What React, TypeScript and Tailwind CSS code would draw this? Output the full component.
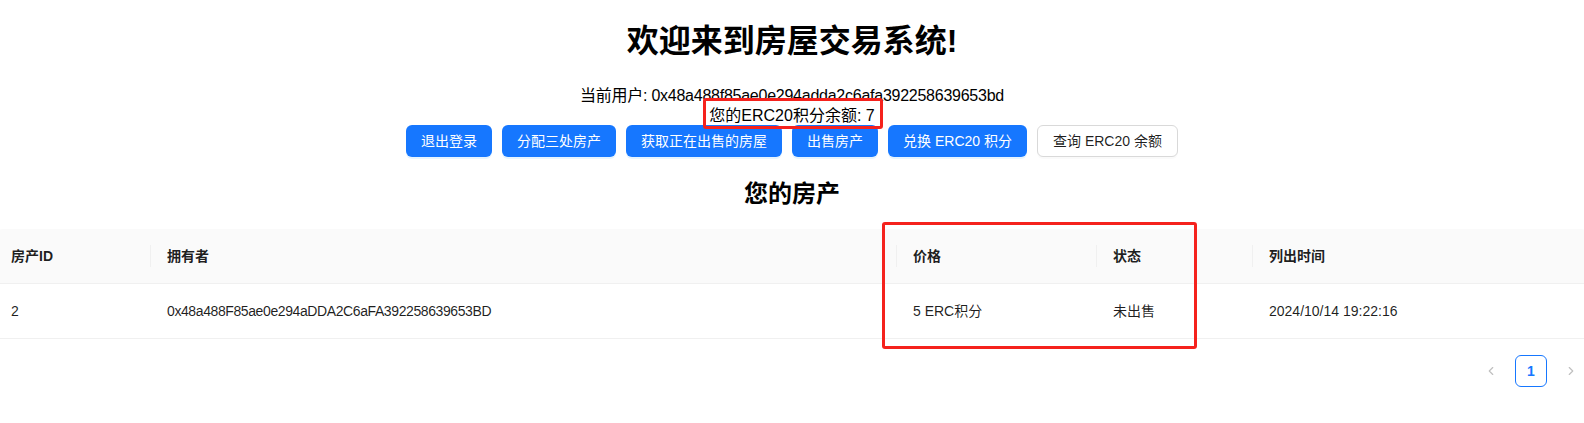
import React from 'react';
import { ChevronLeft, ChevronRight } from 'lucide-react';

const columns = [
  { key: 'id', title: '房产ID', width: 'w-[156px]' },
  { key: 'owner', title: '拥有者', width: 'w-[746px]' },
  { key: 'price', title: '价格', width: 'w-[200px]' },
  { key: 'status', title: '状态', width: 'w-[156px]' },
  { key: 'listedAt', title: '列出时间', width: 'flex-1' },
];

const rows = [
  {
    id: '2',
    owner: '0x48a488F85ae0e294aDDA2C6aFA392258639653BD',
    price: '5 ERC积分',
    status: '未出售',
    listedAt: '2024/10/14 19:22:16',
  },
];

const actions = ['退出登录', '分配三处房产', '获取正在出售的房屋', '出售房产', '兑换 ERC20 积分'];

const App: React.FC = () => {
  return (
    <div className="relative min-h-[423px] overflow-hidden bg-white font-['Liberation_Sans','Noto_Sans_CJK_SC',sans-serif] text-black">
      <div className="flex flex-col items-center">
        {/* Header */}
        <h1 className="mt-[21px] text-[32px] leading-[40px] font-bold">欢迎来到房屋交易系统!</h1>
        <p className="mt-[24px] text-[16px] leading-[21px] tracking-[-0.25px]">当前用户: 0x48a488f85ae0e294adda2c6afa392258639653bd</p>
        <p className="text-[16px] leading-[19px]">您的ERC20积分余额: 7</p>

        {/* Actions */}
        <div className="flex gap-[10px]">
          {actions.map((label) => (
            <button
              key={label}
              className="h-8 rounded-md bg-[#1677ff] px-[15px] text-[14px] text-white shadow-[0_2px_0_rgba(5,145,255,0.1)]"
            >
              {label}
            </button>
          ))}
          <button className="h-8 rounded-md border border-[#d9d9d9] bg-white px-[15px] text-[14px] text-black/[0.88] shadow-[0_2px_0_rgba(0,0,0,0.02)]">
            查询 ERC20 余额
          </button>
        </div>

        <h2 className="mt-[21px] text-[24px] leading-[32px] font-bold">您的房产</h2>
      </div>

      {/* Table */}
      <div className="mx-[-5px] mt-[19px] text-[14px] text-black/[0.88]">
        <div className="flex h-[55px] rounded-t-lg border-b border-[#f0f0f0] bg-[#fafafa] font-semibold">
          {columns.map((col, i) => (
            <div key={col.key} className={`${col.width} flex items-center justify-between`}>
              <span className="pl-4">{col.title}</span>
              {i < columns.length - 1 && <div className="h-[22px] w-px bg-[#f0f0f0]"></div>}
            </div>
          ))}
        </div>
        {rows.map((row) => (
          <div key={row.id} className="flex h-[55px] border-b border-[#f0f0f0]">
            <div className="flex w-[156px] items-center pl-4">{row.id}</div>
            <div className="flex w-[746px] items-center pl-4 tracking-[-0.4px]">{row.owner}</div>
            <div className="flex w-[200px] items-center pl-4">{row.price}</div>
            <div className="flex w-[156px] items-center pl-4">{row.status}</div>
            <div className="flex flex-1 items-center pl-4">{row.listedAt}</div>
          </div>
        ))}

        {/* Pagination */}
        <div className="mt-4 flex justify-end gap-2 pr-[2px]">
          <div className="flex h-8 w-8 items-center justify-center text-black/25">
            <ChevronLeft size={14} strokeWidth={2} />
          </div>
          <div className="flex h-8 w-8 items-center justify-center rounded-md border border-[#1677ff] font-semibold text-[#1677ff]">
            1
          </div>
          <div className="flex h-8 w-8 items-center justify-center text-black/25">
            <ChevronRight size={14} strokeWidth={2} />
          </div>
        </div>
      </div>

      {/* Red annotation boxes */}
      <div className="absolute left-[703px] top-[98px] h-[31px] w-[180px] rounded-[3px] border-[3px] border-[#f5221d]"></div>
      <div className="absolute left-[882px] top-[222px] h-[127px] w-[315px] rounded-[3px] border-[3px] border-[#f5221d]"></div>
    </div>
  );
};

export default App;
